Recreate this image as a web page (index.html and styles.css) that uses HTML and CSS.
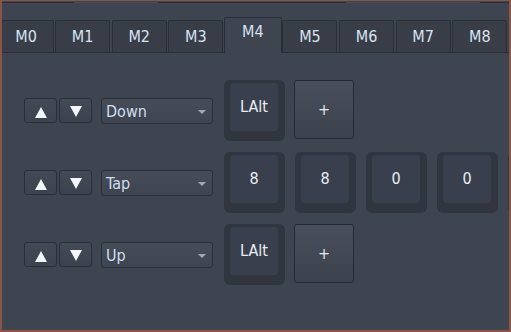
FILE: index.html
```html
<!DOCTYPE html>
<html>
<head>
<title>Macro Editor</title>
<link rel="stylesheet" href="styles.css">
</head>
<body>
<div class="window">
<div class="ghost">
<span class="seg dark" style="width:72px"></span>
<span class="seg" style="width:84px"></span>
<span class="seg dark" style="width:188px"></span>
<span class="seg" style="width:134px"></span>
<span class="seg dark" style="width:29px"></span>
</div>
<div class="tabbar">
<div class="tab">M0</div>
<div class="tab">M1</div>
<div class="tab">M2</div>
<div class="tab">M3</div>
<div class="tab active">M4</div>
<div class="tab">M5</div>
<div class="tab">M6</div>
<div class="tab">M7</div>
<div class="tab">M8</div>
</div>
<div class="panel">

<div class="row">
<button class="arrow"><svg width="12" height="11" viewBox="0 0 12 11"><polygon points="6,0 12,11 0,11" fill="#f1f4f8"/></svg></button>
<button class="arrow down"><svg width="12" height="11" viewBox="0 0 12 11"><polygon points="0,0 12,0 6,11" fill="#f1f4f8"/></svg></button>
<div class="combo">Down<span class="caret"></span></div>
<div class="key"><div class="cap">LAlt</div></div>
<button class="plus">+</button>
</div>

<div class="row">
<button class="arrow"><svg width="12" height="11" viewBox="0 0 12 11"><polygon points="6,0 12,11 0,11" fill="#f1f4f8"/></svg></button>
<button class="arrow down"><svg width="12" height="11" viewBox="0 0 12 11"><polygon points="0,0 12,0 6,11" fill="#f1f4f8"/></svg></button>
<div class="combo">Tap<span class="caret"></span></div>
<div class="key"><div class="cap">8</div></div>
<div class="key"><div class="cap">8</div></div>
<div class="key"><div class="cap">0</div></div>
<div class="key"><div class="cap">0</div></div>
<div class="key"><div class="cap"></div></div>
</div>

<div class="row">
<button class="arrow"><svg width="12" height="11" viewBox="0 0 12 11"><polygon points="6,0 12,11 0,11" fill="#f1f4f8"/></svg></button>
<button class="arrow down"><svg width="12" height="11" viewBox="0 0 12 11"><polygon points="0,0 12,0 6,11" fill="#f1f4f8"/></svg></button>
<div class="combo">Up<span class="caret"></span></div>
<div class="key"><div class="cap">LAlt</div></div>
<button class="plus">+</button>
</div>

</div>
</div>
</body>
</html>
```

FILE: styles.css
```css
body {
margin: 0;
font-family: "DejaVu Sans", sans-serif;
font-stretch: condensed;
font-size: 16px;
}
.window {
width: 511px;
height: 332px;
box-sizing: border-box;
border: 2px solid #8a5547;
border-top-width: 1px;
background-color: #3e4450;
overflow: hidden;
}
.ghost {
display: flex;
height: 16px;
}
.seg {
height: 1px;
margin-top: 1px;
background-color: #444a56;
}
.seg.dark {
background-color: #2a2e36;
}
.tabbar {
display: flex;
align-items: flex-end;
gap: 1.6px;
height: 35px;
margin-left: -3.5px;
border-bottom: 1px solid #2a2e36;
}
.tab {
flex-shrink: 0;
width: 55px;
height: 32px;
box-sizing: border-box;
border: 1px solid #2a2e36;
border-bottom: none;
border-radius: 2px 2px 0 0;
background-color: #383d48;
color: #d6e3f0;
text-align: center;
line-height: 31px;
}
.tab.active {
width: 58px;
height: 36px;
margin: 0 -1px -1px -1px;
background-color: #3e4450;
line-height: 28px;
}
.panel {
padding: 27px 0 0 22px;
}
.row {
display: flex;
align-items: center;
height: 61px;
margin-bottom: 11px;
}
.arrow {
flex-shrink: 0;
width: 33px;
height: 25px;
padding: 0;
display: flex;
align-items: center;
justify-content: center;
border: 1px solid #2a2e36;
border-radius: 3px;
background: linear-gradient(#434955, #3c424e);
}
.arrow svg {
margin-top: 4px;
}
.arrow.down {
margin-left: 2px;
}
.arrow.down svg {
margin-top: 1px;
}
.combo {
flex-shrink: 0;
position: relative;
width: 112px;
height: 26px;
box-sizing: border-box;
margin: 0 11px 0 9px;
padding-left: 4px;
border: 1px solid #2a2e36;
border-radius: 3px;
background: linear-gradient(#474d58, #3e4450);
color: #cfdff0;
line-height: 25px;
}
.caret {
position: absolute;
right: 6px;
top: 11px;
border-left: 4px solid transparent;
border-right: 4px solid transparent;
border-top: 4px solid #a2a7ae;
}
.key {
flex-shrink: 0;
width: 61px;
height: 61px;
box-sizing: border-box;
margin-right: 10px;
padding: 3px 7px 10px 6px;
border-radius: 6px;
background-color: #30353f;
}
.cap {
height: 48px;
border-radius: 4px;
background-color: #393f4c;
color: #e8eef4;
text-align: center;
line-height: 48px;
}
.plus {
flex-shrink: 0;
align-self: flex-start;
width: 60px;
height: 59px;
padding: 0;
margin-left: -1px;
border: 1px solid #26292f;
border-radius: 3px;
background: linear-gradient(#484e5a, #3d434e);
color: #e3e8ef;
font-family: "DejaVu Sans", sans-serif;
font-stretch: condensed;
font-size: 16px;
}
```
